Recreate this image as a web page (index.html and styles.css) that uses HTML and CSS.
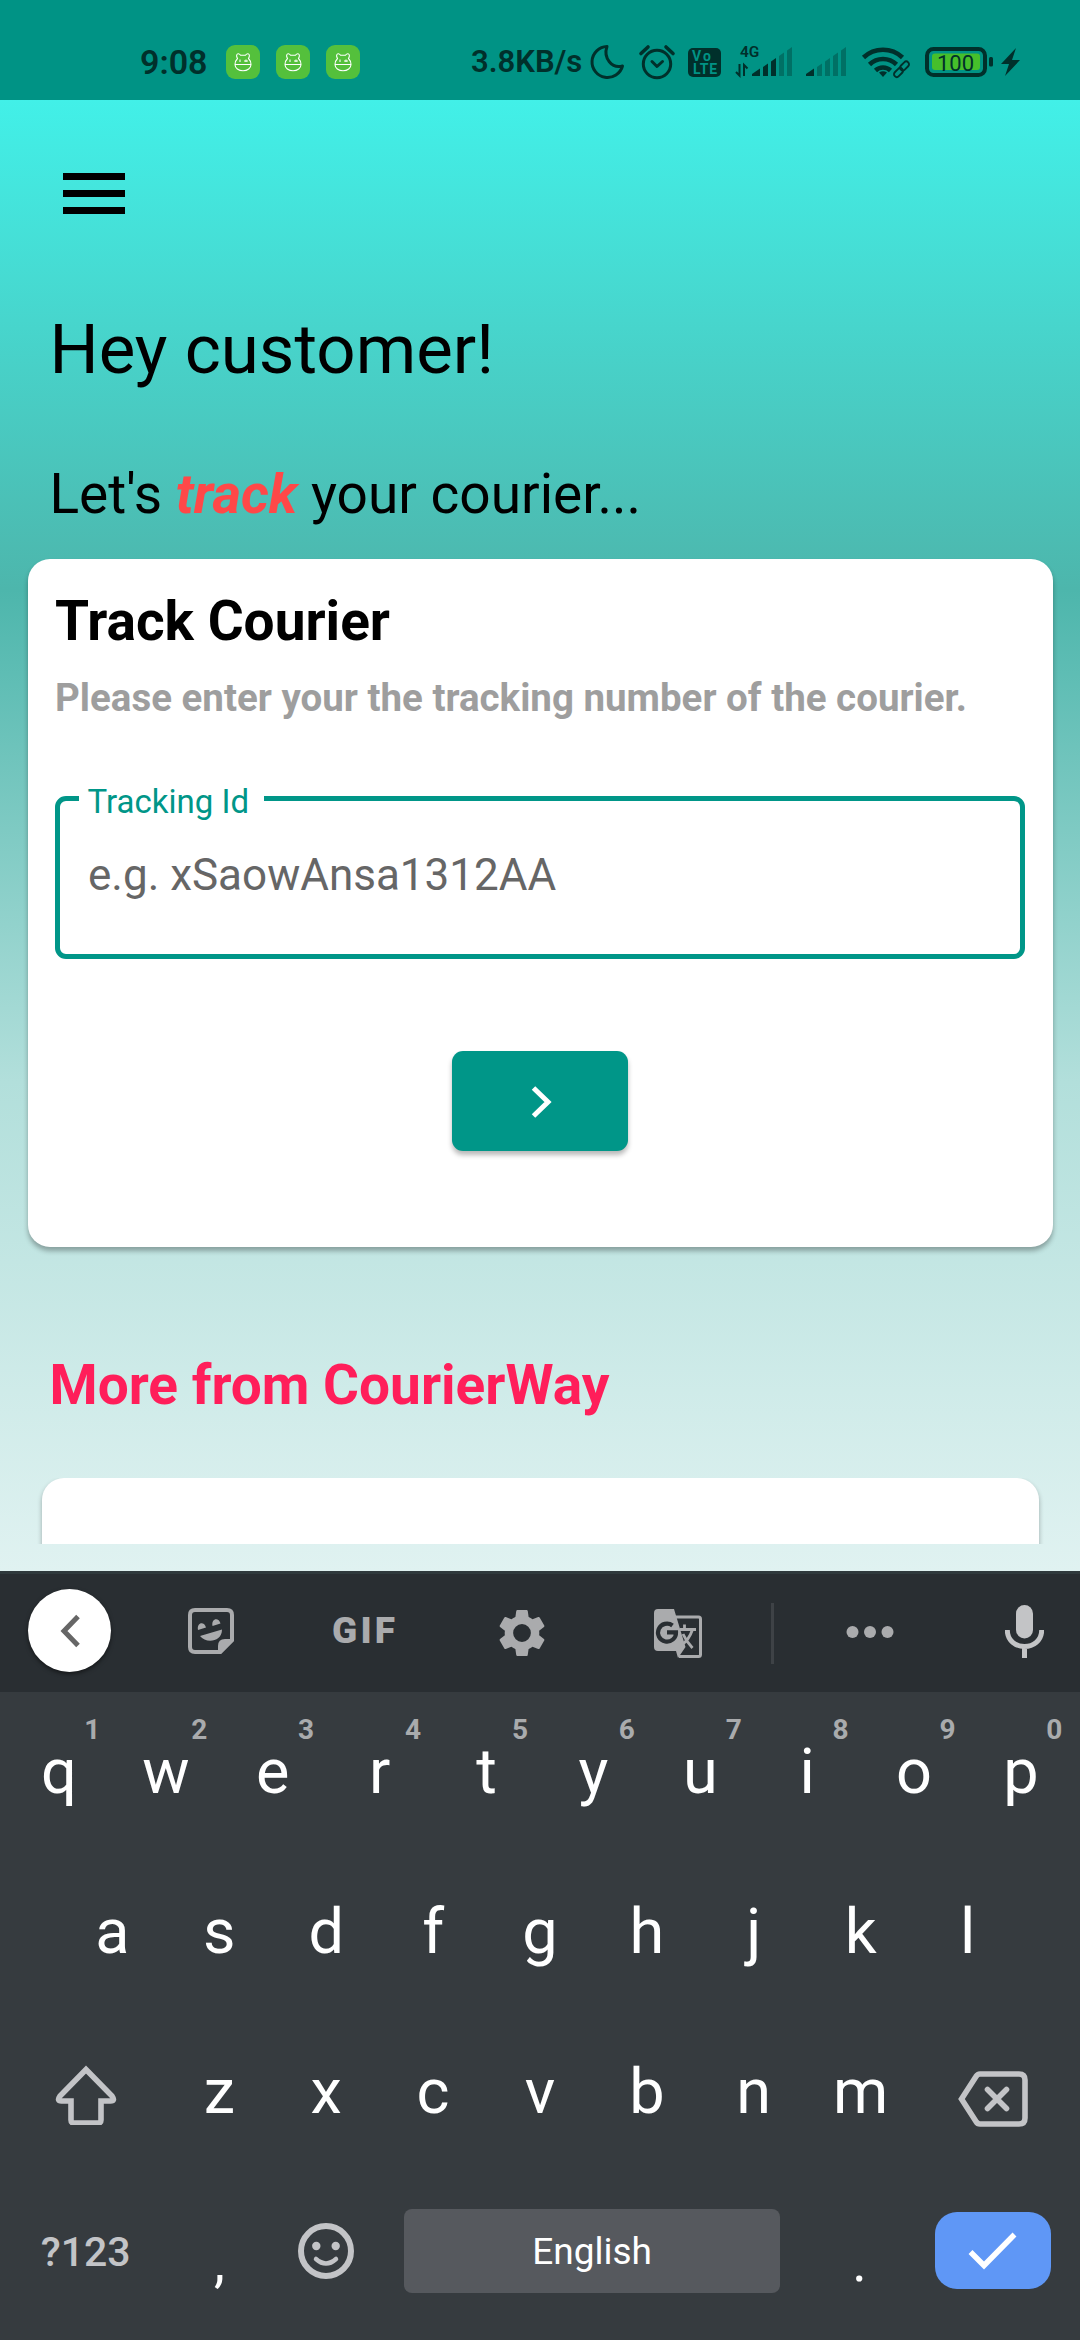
FILE: index.html
```html
<!DOCTYPE html>
<html lang="en">
<head>
<meta charset="utf-8">
<title>CourierWay</title>
<link rel="stylesheet" href="styles.css">
</head>
<body>
<div class="screen">
  <header class="status">
    <span class="clock">9:08</span>
    <div class="notifs">
      <svg class="notif" viewBox="0 0 34 34"><rect width="34" height="34" rx="9" fill="#54c03c"/><g fill="none" stroke="#fff" stroke-width="1.1"><path d="M11.5 13.5C10 11 10.500 9 12 8.700c1.500-.2 2 .8 2.500 1.500h5c.5-.7 1-1.700 2.500-1.500 1.500.3 2 2.300.5 4.800C24 15 25 17 25 19.500c0 3.500-3.500 6.300-8 6.300s-8-2.800-8-6.300c0-2.500 1-4.500 2.500-6zM9 19.500h16M14 14.500v2.500M18 16h4M20 14.500v2.500"/></g></svg>
      <svg class="notif" viewBox="0 0 34 34"><rect width="34" height="34" rx="9" fill="#54c03c"/><g fill="none" stroke="#fff" stroke-width="1.1"><path d="M11.5 13.5C10 11 10.500 9 12 8.700c1.500-.2 2 .8 2.500 1.500h5c.5-.7 1-1.700 2.500-1.500 1.500.3 2 2.300.5 4.800C24 15 25 17 25 19.500c0 3.500-3.500 6.300-8 6.300s-8-2.800-8-6.300c0-2.500 1-4.500 2.500-6zM9 19.500h16M14 14.500v2.500M18 16h4M20 14.500v2.500"/></g></svg>
      <svg class="notif" viewBox="0 0 34 34"><rect width="34" height="34" rx="9" fill="#54c03c"/><g fill="none" stroke="#fff" stroke-width="1.1"><path d="M11.5 13.5C10 11 10.500 9 12 8.700c1.500-.2 2 .8 2.500 1.500h5c.5-.7 1-1.700 2.500-1.500 1.500.3 2 2.300.5 4.800C24 15 25 17 25 19.500c0 3.500-3.500 6.300-8 6.300s-8-2.800-8-6.300c0-2.500 1-4.500 2.500-6zM9 19.500h16M14 14.500v2.500M18 16h4M20 14.500v2.500"/></g></svg>
    </div>
    <span class="speed">3.8KB/s</span>
    <svg class="system" viewBox="590 40 434 44" width="434" height="44">
      <path d="M607 46.500A15.500 15.500 0 1 0 622.500 66C612 69 603 58 607 46.500z" fill="none" stroke="#00302b" stroke-width="3" stroke-linejoin="round"/>
      <g fill="none" stroke="#00302b" stroke-width="3" stroke-linecap="round" stroke-linejoin="round"><circle cx="657" cy="64" r="13.700"/><path d="M652 61.500l5 5 5.500-5"/><path d="M641 53.500l7-6.500M666 47l7 6.500" stroke-width="3.600"/></g>
      <rect x="688" y="48" width="33" height="29" rx="5" fill="#00302b"/>
      <text x="692" y="61" class="volte" textLength="19">Vo</text><text x="693" y="74" class="volte" textLength="24">LTE</text>
      <text x="740" y="57" class="net">4G</text>
      <path d="M739.500 64v11.500l-3.500-3.500M744 76V65l3.500 3.500" fill="none" stroke="#00302b" stroke-width="2"/>
      <g fill="#00302b"><path d="M752 76v-2l8-5.500V76zM763 76v-9l5-3.500V76zM771 76V61.500l5-3.500v18z"/><path d="M779 76V56l5-3.500V76zM787 76V50.500l5-3.500v29z" opacity=".35"/></g>
      <g fill="#00302b"><path d="M806 76v-2l8-5.500V76z"/><path d="M817 76v-9l5-3.500V76zM825 76V61.500l5-3.500v18zM833 76V56l5-3.500V76zM841 76V50.500l5-3.500v29z" opacity=".35"/></g>
      <g fill="none" stroke="#00302b" stroke-width="4.600"><path d="M863.500 57.500a28.500 28.500 0 0 1 39 0M869.500 64.500a19.500 19.500 0 0 1 27 0M875.500 70.500a11 11 0 0 1 15 0"/></g>
      <path d="M883 77l-4-4.500q4-2.500 8 0z" fill="#00302b"/>
      <g fill="none" stroke="#00302b" stroke-width="1.900"><rect x="-5.200" y="-2.800" width="10.400" height="5.600" rx="2.800" transform="translate(904.500 66) rotate(-45)"/><rect x="-5.200" y="-2.800" width="10.400" height="5.600" rx="2.800" transform="translate(898.500 72.500) rotate(-45)"/></g>
      <rect x="927" y="49" width="58" height="26" rx="6.500" fill="none" stroke="#00302b" stroke-width="4"/>
      <rect x="932" y="53.500" width="48" height="16.500" rx="3" fill="#46bf2b"/>
      <rect x="989" y="57" width="4" height="9.500" rx="1.500" fill="#00302b"/>
      <text x="937" y="71" class="level">100</text>
      <path d="M1016 48l-15 16h8l-4 12 15-16h-8z" fill="#00302b"/>
    </svg>
  </header>

  <main class="app">
    <svg class="menu" viewBox="0 0 62 42"><path d="M0 0h62v7H0zM0 17h62v7H0zM0 34h62v7H0z"/></svg>
    <h1 class="hello">Hey customer!</h1>
    <p class="lead">Let's <em>track</em> your courier...</p>
    <section class="card">
      <h2>Track Courier</h2>
      <p class="hint">Please enter your the tracking number of the courier.</p>
      <div class="field"><span class="label">Tracking Id</span><span class="placeholder">e.g. xSaowAnsa1312AA</span></div>
      <button class="go"><svg viewBox="0 0 22 34" width="22" height="34"><path d="M2.500 3L17 17 2.500 31" fill="none" stroke="#fff" stroke-width="5"/></svg></button>
    </section>
    <h2 class="more">More from CourierWay</h2>
    <div class="list"><div class="item"></div></div>
  </main>

  <section class="keyboard">
    <div class="toolbar">
      <span class="back"><svg viewBox="0 0 22 34" width="22" height="34"><path d="M19 2.500L5 17l14 14.500" fill="none" stroke="#666" stroke-width="5"/></svg></span>
      <svg class="sticker" viewBox="0 0 46 46"><path d="M7 2h32q5 0 5 5v25L32 44H7q-5 0-5-5V7q0-5 5-5z" fill="none" stroke="#aaabad" stroke-width="4"/><path d="M30 46V38q0-7 7-7h9v2L33 46zM10 22c-1.500-8 6.500-9 8-2.500zM24.500 18c-1.500-8 6.500-9 8-2.500zM12 28l22-6.500C34 34 18 36 12 28z" fill="#aaabad"/></svg>
      <span class="gif">GIF</span>
      <svg class="gear" viewBox="2 2 20 20"><path fill="#aaabad" d="M19.140 12.940c.04-.3.06-.61.06-.94s-.02-.64-.07-.94l2.030-1.580c.18-.14.23-.41.12-.61l-1.920-3.320c-.12-.22-.37-.29-.59-.22l-2.390.96c-.5-.38-1.030-.7-1.620-.94l-.36-2.540c-.04-.24-.24-.41-.48-.41h-3.840c-.24 0-.43.17-.47.41l-.36 2.540c-.59.24-1.130.57-1.620.94l-2.390-.96c-.22-.08-.47 0-.59.22L2.740 8.870c-.12.21-.08.47.12.61l2.030 1.580c-.05.3-.09.63-.09.94s.02.64.07.94l-2.030 1.580c-.18.14-.23.41-.12.61l1.920 3.320c.12.22.37.29.59.22l2.390-.96c.5.38 1.030.7 1.620.94l.36 2.540c.05.24.24.41.48.41h3.840c.24 0 .44-.17.47-.41l.36-2.540c.59-.24 1.130-.56 1.620-.94l2.390.96c.22.08.47 0 .59-.22l1.920-3.320c.12-.22.07-.47-.12-.61zM12 15.700a3.700 3.700 0 1 1 0-7.400 3.700 3.700 0 0 1 0 7.400z"/></svg>
      <svg class="translate" viewBox="0 0 48 49"><path d="M4 0h16l11.500 38L24 49l-2-7H4q-4 0-4-4V4q0-4 4-4z" fill="#aaabad"/><path d="M22 8h22.500q2 0 2 2v35.500q0 2-2 2H25" fill="none" stroke="#aaabad" stroke-width="3"/><path d="M18.500 16.500A9 9 0 1 0 22 23.300H13" fill="none" stroke="#292e32" stroke-width="4.200"/><path d="M26 20.500h16M30.500 15.500v5M38.500 20.500Q35 31 27.500 36M29 25q3 7 9.500 14" fill="none" stroke="#aaabad" stroke-width="2.800"/></svg>
      <span class="rule"></span>
      <svg class="dots" viewBox="0 0 48 12"><g fill="#aaabad"><circle cx="6.500" cy="6" r="6"/><circle cx="24" cy="6" r="6"/><circle cx="41.500" cy="6" r="6"/></g></svg>
      <svg class="mic" viewBox="0 0 39 53"><rect x="11" y="0" width="17" height="33.500" rx="8.500" fill="#c3c4c6"/><path d="M2.300 25c0 22 34.400 22 34.400 0M19.500 42v11" fill="none" stroke="#c3c4c6" stroke-width="5"/></svg>
    </div>
    <div class="row">
      <span class="key">q<sup>1</sup></span><span class="key">w<sup>2</sup></span><span class="key">e<sup>3</sup></span><span class="key">r<sup>4</sup></span><span class="key">t<sup>5</sup></span><span class="key">y<sup>6</sup></span><span class="key">u<sup>7</sup></span><span class="key">i<sup>8</sup></span><span class="key">o<sup>9</sup></span><span class="key">p<sup>0</sup></span>
    </div>
    <div class="row home">
      <span class="key">a</span><span class="key">s</span><span class="key">d</span><span class="key">f</span><span class="key">g</span><span class="key">h</span><span class="key">j</span><span class="key">k</span><span class="key">l</span>
    </div>
    <div class="row">
      <span class="key wide"><svg class="shift" viewBox="0 0 62 60"><path d="M31 4.500L57 31q3.500 5-1.500 5H46v19q0 3-3 3H19q-3 0-3-3V36H6.500q-5 0-1.500-5z" fill="none" stroke="#c3c4c7" stroke-width="5.600"/></svg></span>
      <span class="key">z</span><span class="key">x</span><span class="key">c</span><span class="key">v</span><span class="key">b</span><span class="key">n</span><span class="key">m</span>
      <span class="key wide"><svg class="erase" viewBox="0 0 70 56"><path d="M22 3h39q6 0 6 6v38q0 6-6 6H22q-2.500 0-4-2.500L3.500 28 18 5.500Q19.500 3 22 3z" fill="none" stroke="#c3c4c7" stroke-width="5.600"/><path d="M29.500 18.500l19 19m0-19l-19 19" stroke="#c3c4c7" stroke-width="5.600" stroke-linecap="round"/></svg></span>
    </div>
    <div class="row last">
      <span class="key wide mode">?123</span>
      <span class="key punct">,</span>
      <span class="key"><svg class="smile" viewBox="0 0 56 56"><circle cx="28" cy="28" r="25" fill="none" stroke="#c3c4c7" stroke-width="6"/><circle cx="18.300" cy="23" r="4.200" fill="#c3c4c7"/><circle cx="37.700" cy="23" r="4.200" fill="#c3c4c7"/><path d="M18 36q10 9 20 0" fill="none" stroke="#c3c4c7" stroke-width="4.500" stroke-linecap="round"/></svg></span>
      <span class="space">English</span>
      <span class="key punct dot">.</span>
      <span class="enter"><svg viewBox="0 0 50 38" width="50" height="38"><path d="M2.500 20L16 33.500 46.500 2.500" fill="none" stroke="#fff" stroke-width="5.500"/></svg></span>
    </div>
  </section>
</div>
</body>
</html>
```
FILE: styles.css
```css
* { box-sizing: border-box; }
body, h1, h2, p { margin: 0; }
body { font-family: Roboto, sans-serif; color: #000; }
svg { display: block; flex: none; }
.screen { width: 1080px; height: 2340px; display: flex; flex-direction: column; overflow: hidden; }

.status { height: 100px; flex: none; background: #009385; display: flex; align-items: center; padding: 24px 0 0 140px; color: #00302b; font-weight: 600; }
.clock { width: 86px; font-size: 34px; line-height: 40px; margin-top: -1px; white-space: nowrap; }
.notifs { display: flex; gap: 16px; width: 245px; }
.notif { width: 34px; height: 34px; }
.speed { width: 119px; font-size: 31px; line-height: 40px; white-space: nowrap; margin-top: 0; }
.volte { font-size: 14px; font-weight: 700; fill: #009385; }
.net { font-size: 15.5px; font-weight: 600; fill: #00302b; }
.level { font-size: 22px; font-weight: 400; fill: #00302b; }

.app { height: 1471px; flex: none; display: flex; flex-direction: column; padding: 73px 27.5px 0; background: linear-gradient(#42f0e8, #4db6ac 33.3%, #b2dfdb 66.7%, #e0f2f1); }
.menu { width: 62px; height: 42px; margin-left: 35.5px; }
.hello { margin: 95px 0 0 22px; font-size: 69px; line-height: 80px; font-weight: 400; white-space: nowrap; }
.lead { margin: 71px 0 0 22px; font-size: 55px; line-height: 66px; white-space: nowrap; }
.lead em { color: #ff4848; font-weight: 700; }
.card { height: 687.5px; flex: none; margin-top: 32px; padding: 30px 27.500px 0; background: #fff; border-radius: 22px; box-shadow: 0 4px 5px rgba(0,0,0,.3); display: flex; flex-direction: column; }
.card h2 { font-size: 55px; line-height: 64px; font-weight: 700; white-space: nowrap; }
.hint { margin-top: 22px; font-size: 38.5px; line-height: 46px; font-weight: 700; color: #9e9e9e; white-space: nowrap; }
.field { position: relative; margin-top: 75px; height: 163px; flex: none; border: 5.5px solid #009688; border-radius: 11px; padding: 49px 0 0 28px; }
.label { position: absolute; left: 19px; top: -18px; width: 185px; padding-left: 8.5px; background: #fff; color: #009688; font-size: 33px; line-height: 38px; white-space: nowrap; }
.placeholder { display: block; font-size: 44px; line-height: 50px; color: #666; white-space: nowrap; }
.go { width: 176px; height: 99.5px; margin: 92px auto 0; padding: 2px 0 0 4px; border: 0; border-radius: 11px; background: #009688; box-shadow: 0 4px 5px rgba(0,0,0,.28); display: flex; align-items: center; justify-content: center; }
.more { margin: 105.5px 0 0 22px; font-size: 55px; line-height: 66px; font-weight: 700; color: #ff1e5a; white-space: nowrap; }
.list { margin: 60px 0 0; height: 66px; overflow: hidden; padding: 0 14px; }
.item { height: 300px; background: #fff; border-radius: 22px; box-shadow: 0 3px 5px rgba(0,0,0,.3); }

.keyboard { flex: 1; background: #363b3f; color: #fff; display: flex; flex-direction: column; }
.toolbar { height: 121px; flex: none; background: #292e32; border-top: 3px solid #303a3d; display: flex; align-items: center; padding-left: 28px; }
.back { width: 83px; height: 83px; border-radius: 50%; background: #fff; display: flex; align-items: center; justify-content: center; box-shadow: 0 2px 4px rgba(0,0,0,.5); margin-top: -5px; }
.sticker { width: 46px; height: 46px; margin: -4px 0 0 77px; }
.gif { width: 68px; margin: -5px 0 0 98px; font-size: 37px; line-height: 40px; font-weight: 900; letter-spacing: 3.2px; color: #aaabad; white-space: nowrap; }
.gear { width: 48px; height: 48px; margin-left: 98px; }
.translate { width: 48px; height: 49px; margin-left: 108px; }
.rule { width: 3px; height: 61px; margin-left: 69px; background: #3e4246; }
.dots { width: 48px; height: 12px; margin: -2px 0 0 71.500px; }
.mic { width: 39px; height: 53px; margin: -4px 0 0 111px; }

.row { height: 160px; flex: none; display: flex; padding: 0 5.5px; }
.home { padding: 0 59px; }
.key { position: relative; width: 106.9px; flex: none; padding-top: 43px; text-align: center; font-size: 63px; line-height: 74px; }
.key sup { position: absolute; right: 12px; top: 21px; font-size: 28px; line-height: 33px; font-weight: 700; color: #a9abad; }
.wide { width: 160.35px; }
.shift { width: 62px; height: 60px; margin: 10px 0 0 49px; }
.erase { width: 70px; height: 56px; margin: 16px 0 0 44px; }
.last { height: 168px; }
.mode { font-size: 41px; font-weight: 500; color: #c3c4c7; padding-top: 43px; }
.punct { font-size: 55px; padding-top: 53px; }
.smile { width: 56px; height: 56px; margin: 8px auto 0; }
.space { width: 376px; height: 84px; margin: 37px 0 0 24.500px; border-radius: 8px; background: #56595e; font-size: 37px; line-height: 86px; text-align: center; }
.dot { margin-left: 26px; }
.enter { width: 116px; height: 77px; margin: 40px 0 0 22px; border-radius: 22px; background: #5f97f6; display: flex; align-items: center; justify-content: center; }
```
